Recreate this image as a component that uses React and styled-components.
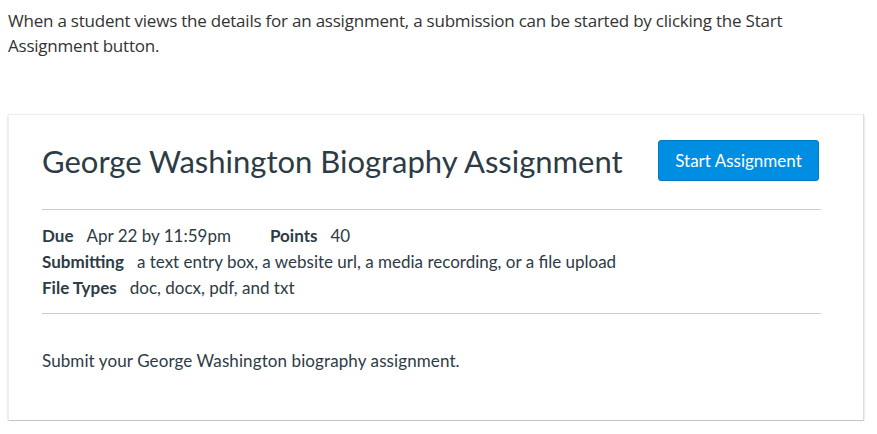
import React from 'react';
import styled, { createGlobalStyle } from 'styled-components';

const GlobalStyle = createGlobalStyle`
  body {
    margin: 0;
    background: #ffffff;
  }
`;

const Page = styled.div`
  padding: 8px 8px 0 8px;
  width: 877px;
  box-sizing: border-box;
`;

const Intro = styled.p`
  font-family: "Open Sans", "Liberation Sans", sans-serif;
  font-size: 17px;
  line-height: 25px;
  color: #333333;
  margin: 0 0 56px 0;
  letter-spacing: -0.22px;
`;

const Card = styled.div`
  width: 856px;
  box-sizing: border-box;
  border: 1px solid #eeeeee;
  border-right-color: #dddddd;
  border-bottom-color: #c4c4c4;
  box-shadow: 0 1px 2px rgba(0, 0, 0, 0.2);
  padding: 0 42px 0 33px;
  height: 307px;
  font-family: Lato, "Open Sans", sans-serif;
  color: #2d3b45;
`;

const Header = styled.div`
  display: flex;
  align-items: center;
  justify-content: space-between;
  padding: 25px 2px 28px 0;
  border-bottom: 1px solid #c7cdd1;
`;

const Title = styled.h1`
  margin: 0;
  font-size: 31px;
  font-weight: 400;
  line-height: 40px;
  color: #2d3b45;
`;

const StartButton = styled.button`
  background: #008ee2;
  color: #ffffff;
  border: 1px solid #0079c1;
  border-radius: 3px;
  font-family: Lato, sans-serif;
  font-size: 17px;
  height: 41px;
  width: 161px;
  padding: 0;
  cursor: pointer;
`;

const Meta = styled.div`
  padding: 13px 0 12px 0;
  border-bottom: 1px solid #c7cdd1;
`;

const MetaLine = styled.div`
  display: flex;
  font-size: 17px;
  line-height: 26px;
`;

const MetaItem = styled.span`
  margin-right: ${(p) => p.gap || 0}px;
`;

const Label = styled.strong`
  font-weight: 700;
  margin-right: 13px;
`;

const Description = styled.p`
  margin: 35px 0 0 0;
  font-size: 17px;
  line-height: 24px;
  letter-spacing: 0.1px;
`;

export default function App() {
  return (
    <Page>
      <GlobalStyle />
      <Intro>
        When a student views the details for an assignment, a submission can be started by clicking the Start
        <br />
        Assignment button.
      </Intro>
      <Card>
        <Header>
          <Title>George Washington Biography Assignment</Title>
          <StartButton>Start Assignment</StartButton>
        </Header>
        <Meta>
          <MetaLine>
            <MetaItem gap={39}>
              <Label>Due</Label>Apr 22 by 11:59pm
            </MetaItem>
            <MetaItem>
              <Label>Points</Label>40
            </MetaItem>
          </MetaLine>
          <MetaLine>
            <MetaItem>
              <Label>Submitting</Label>a text entry box, a website url, a media recording, or a file upload
            </MetaItem>
          </MetaLine>
          <MetaLine>
            <MetaItem>
              <Label>File Types</Label>doc, docx, pdf, and txt
            </MetaItem>
          </MetaLine>
        </Meta>
        <Description>Submit your George Washington biography assignment.</Description>
      </Card>
    </Page>
  );
}
